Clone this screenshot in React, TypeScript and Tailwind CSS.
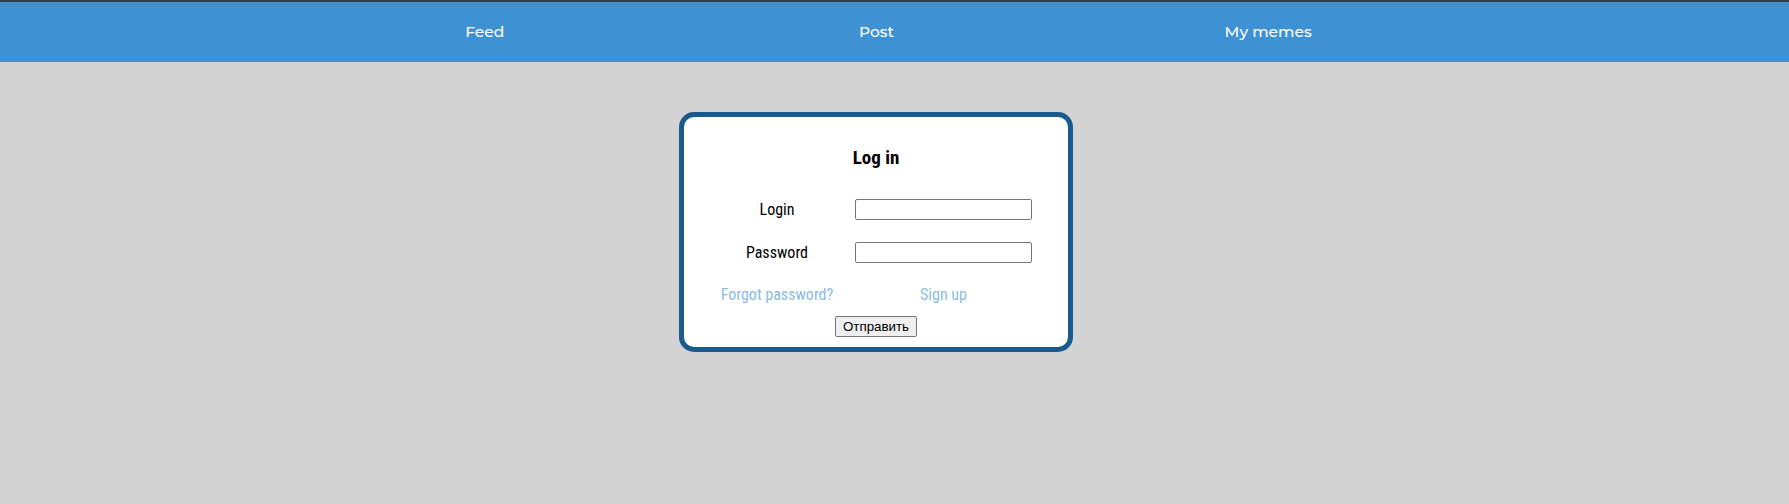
import React from "react";

export default function App() {
  const cond = { fontFamily: '"Roboto Condensed", Roboto, "DejaVu Sans Condensed", sans-serif', fontStretch: "condensed" } as React.CSSProperties;
  return (
    <div className="min-h-[504px] w-full bg-[#d3d3d3]">
      <div className="h-[2px] bg-[#3c3c3c]" />
      <header className="h-[60px] bg-[#3e92d3] pr-[37px]">
        <nav className="ml-[289px] flex h-full w-[1175px] items-center font-['Montserrat','Open_Sans',sans-serif] text-[15.5px] font-medium text-white">
          <a className="flex-1 text-center">Feed</a>
          <a className="flex-1 text-center">Post</a>
          <a className="flex-1 text-center">My memes</a>
        </nav>
      </header>
      <main className="flex justify-center pr-[37px] pt-[50px]">
        <form
          className="w-[394px] rounded-[15px] border-[5px] border-[#1a5a8c] bg-white pb-[10px] pt-[27px]"
          style={cond}
          onSubmit={(e) => e.preventDefault()}
        >
          <h2 className="text-center text-[19px] font-bold leading-[28px] text-black">Log in</h2>
          <div className="ml-[18px] mt-[27px] grid grid-cols-[150px_183px] items-center gap-y-[22px] text-[16px] text-black">
            <label className="text-center leading-[21px]">Login</label>
            <input className="ml-[3px] h-[21px] w-[177px] rounded-[2px] border border-[#767676] bg-white" />
            <label className="text-center leading-[21px]">Password</label>
            <input type="password" className="ml-[3px] h-[21px] w-[177px] rounded-[2px] border border-[#767676] bg-white" />
            <a className="-mt-[1px] text-center leading-[21px] text-[#8bbbe8]">Forgot password?</a>
            <a className="-mt-[1px] text-center leading-[21px] text-[#8bbbe8]">Sign up</a>
          </div>
          <div className="mt-[11px] flex justify-center">
            <button
              type="submit"
              className="h-[21px] w-[82px] rounded-[2px] border border-[#767676] bg-[#efefef] text-[13.33px] leading-[19px] text-black"
              style={{ fontFamily: '"Liberation Sans", Arial, sans-serif' }}
            >
              Отправить
            </button>
          </div>
        </form>
      </main>
    </div>
  );
}
